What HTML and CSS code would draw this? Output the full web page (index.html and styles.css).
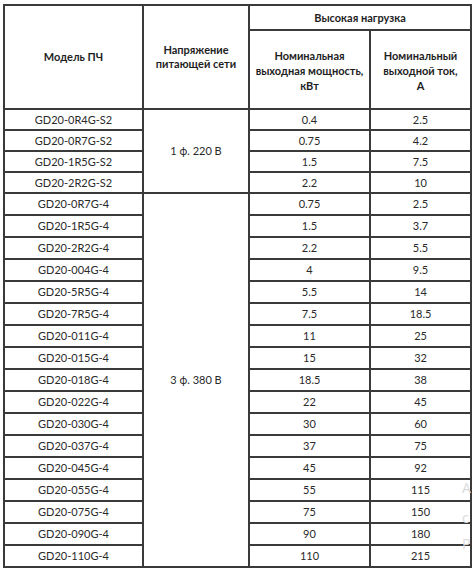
FILE: index.html
```html
<!DOCTYPE html>
<html lang="ru">
<head>
<meta charset="utf-8">
<link rel="stylesheet" href="styles.css">
</head>
<body>
<div class="page">
<table class="spec">
  <colgroup>
    <col class="c1"><col class="c2"><col class="c3"><col class="c4">
  </colgroup>
  <thead>
    <tr class="h1">
      <th rowspan="2">Модель ПЧ</th>
      <th rowspan="2" class="volt">Напряжение<br>питающей сети</th>
      <th colspan="2">Высокая нагрузка</th>
    </tr>
    <tr class="h2">
      <th>Номинальная<br>выходная мощность,<br>кВт</th>
      <th>Номинальный<br>выходной ток,<br>А</th>
    </tr>
  </thead>
  <tbody>
    <tr class="r21"><td>GD20-0R4G-S2</td><td rowspan="4">1 ф. 220 В</td><td>0.4</td><td>2.5</td></tr>
    <tr class="r21"><td>GD20-0R7G-S2</td><td>0.75</td><td>4.2</td></tr>
    <tr class="r21"><td>GD20-1R5G-S2</td><td>1.5</td><td>7.5</td></tr>
    <tr class="r21"><td>GD20-2R2G-S2</td><td>2.2</td><td>10</td></tr>
    <tr class="r22"><td>GD20-0R7G-4</td><td rowspan="17">3 ф. 380 В</td><td>0.75</td><td>2.5</td></tr>
    <tr class="r22"><td>GD20-1R5G-4</td><td>1.5</td><td>3.7</td></tr>
    <tr class="r22"><td>GD20-2R2G-4</td><td>2.2</td><td>5.5</td></tr>
    <tr class="r22"><td>GD20-004G-4</td><td>4</td><td>9.5</td></tr>
    <tr class="r22"><td>GD20-5R5G-4</td><td>5.5</td><td>14</td></tr>
    <tr class="r22"><td>GD20-7R5G-4</td><td>7.5</td><td>18.5</td></tr>
    <tr class="r22"><td>GD20-011G-4</td><td>11</td><td>25</td></tr>
    <tr class="r22"><td>GD20-015G-4</td><td>15</td><td>32</td></tr>
    <tr class="r22"><td>GD20-018G-4</td><td>18.5</td><td>38</td></tr>
    <tr class="r22"><td>GD20-022G-4</td><td>22</td><td>45</td></tr>
    <tr class="r22"><td>GD20-030G-4</td><td>30</td><td>60</td></tr>
    <tr class="r22"><td>GD20-037G-4</td><td>37</td><td>75</td></tr>
    <tr class="r22"><td>GD20-045G-4</td><td>45</td><td>92</td></tr>
    <tr class="r22"><td>GD20-055G-4</td><td>55</td><td>115</td></tr>
    <tr class="r22"><td>GD20-075G-4</td><td>75</td><td>150</td></tr>
    <tr class="r22"><td>GD20-090G-4</td><td>90</td><td>180</td></tr>
    <tr class="r22"><td>GD20-110G-4</td><td>110</td><td>215</td></tr>
  </tbody>
</table>
<div class="mark"><span class="m1">А</span><span class="m2">с</span><span class="m3">Р</span></div>
</div>
</body>
</html>
```
FILE: styles.css
```css
html, body {
  margin: 0;
  padding: 0;
  background: #ffffff;
}
.page {
  position: relative;
  width: 474px;
  height: 570px;
  padding: 4px 0 0 3px;
  box-sizing: border-box;
  overflow: hidden;
}
.spec {
  border-collapse: collapse;
  table-layout: fixed;
  width: 467px;
  border: 2px solid #111;
  font-family: Lato, "Open Sans", sans-serif;
  font-size: 11px;
  color: #2a2a2a;
}
.c1 { width: 139px; }
.c2 { width: 106px; }
.c3 { width: 121px; }
.c4 { width: 101px; }
.spec th, .spec td {
  border: 2px solid #3a3a3a;
  text-align: center;
  vertical-align: middle;
  padding: 0;
  line-height: 14px;
}
.spec th {
  font-weight: 700;
  color: #1e1e1e;
}
.h2 th {
  line-height: 15px;
  padding-top: 2px;
}
.volt {
  padding-top: 4px;
}
.h1 { height: 25px; }
.h2 { height: 79px; }
.r21 { height: 21px; }
.r22 { height: 22px; }
.mark {
  position: absolute;
  left: 462px;
  top: 480px;
  width: 11px;
  font-family: "Open Sans", sans-serif;
  font-size: 14px;
  line-height: 16px;
  color: #dadada;
}
.mark span {
  position: absolute;
  left: 0;
}
.m1 { top: 0; }
.m2 { top: 30px; }
.m3 { top: 56px; }
```
